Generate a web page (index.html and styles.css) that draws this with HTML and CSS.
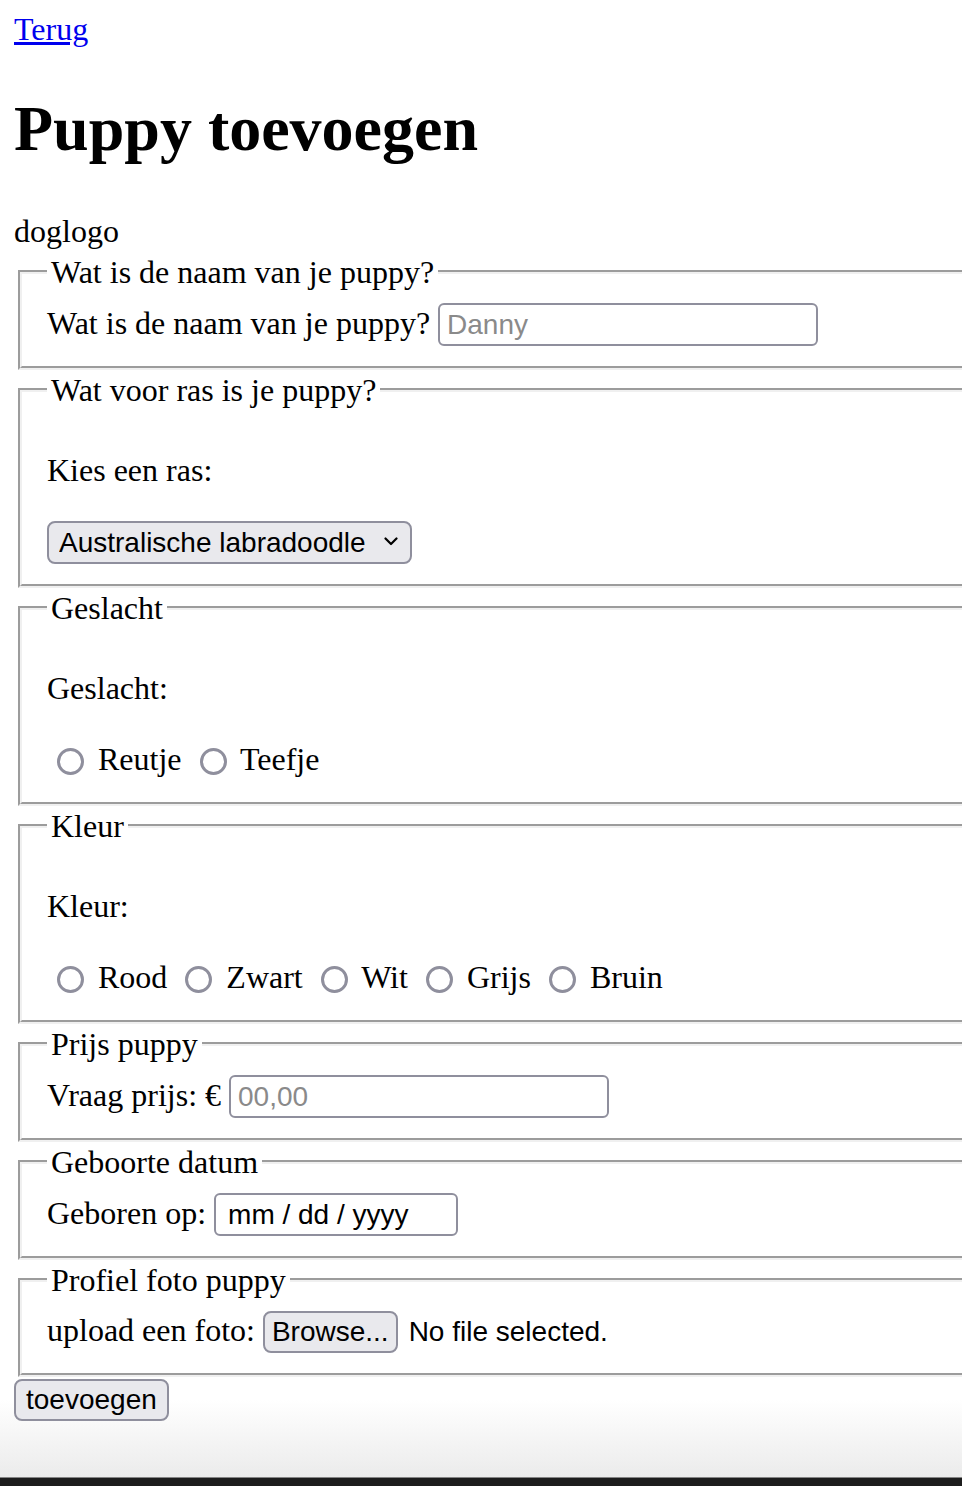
FILE: index.html
```html
<!DOCTYPE html>
<html lang="nl">
<head>
<meta charset="utf-8">
<title>Puppy toevoegen</title>
<link rel="stylesheet" href="styles.css">
</head>
<body>
<a class="back" href="#">Terug</a>
<h1 class="title">Puppy toevoegen</h1>
<div class="logo">doglogo</div>
<form class="puppy-form">
  <fieldset class="group">
    <legend class="group-title">Wat is de naam van je puppy?</legend>
    <div class="row">
      <label for="naam">Wat is de naam van je puppy?</label>
      <input class="field" id="naam" type="text" placeholder="Danny">
    </div>
  </fieldset>
  <fieldset class="group">
    <legend class="group-title">Wat voor ras is je puppy?</legend>
    <p class="question">Kies een ras:</p>
    <div class="choice-row">
      <span class="select-wrap">
        <select class="select" aria-label="ras"><option>Australische labradoodle</option></select>
        <svg class="chevron" viewBox="0 0 14 9" aria-hidden="true"><path d="M1.5 1.5 L7 7 L12.5 1.5" fill="none" stroke="#000" stroke-width="2.2" stroke-linecap="round" stroke-linejoin="round"/></svg>
      </span>
    </div>
  </fieldset>
  <fieldset class="group">
    <legend class="group-title">Geslacht</legend>
    <p class="question">Geslacht:</p>
    <div class="choice-row">
      <label class="option"><input class="radio" type="radio" name="geslacht"> Reutje</label>
      <label class="option"><input class="radio" type="radio" name="geslacht"> Teefje</label>
    </div>
  </fieldset>
  <fieldset class="group">
    <legend class="group-title">Kleur</legend>
    <p class="question">Kleur:</p>
    <div class="choice-row">
      <label class="option"><input class="radio" type="radio" name="kleur"> Rood</label>
      <label class="option"><input class="radio" type="radio" name="kleur"> Zwart</label>
      <label class="option"><input class="radio" type="radio" name="kleur"> Wit</label>
      <label class="option"><input class="radio" type="radio" name="kleur"> Grijs</label>
      <label class="option"><input class="radio" type="radio" name="kleur"> Bruin</label>
    </div>
  </fieldset>
  <fieldset class="group">
    <legend class="group-title">Prijs puppy</legend>
    <div class="row">
      <label for="prijs">Vraag prijs: €</label>
      <input class="field" id="prijs" type="text" placeholder="00,00">
    </div>
  </fieldset>
  <fieldset class="group">
    <legend class="group-title">Geboorte datum</legend>
    <div class="row">
      <label for="datum">Geboren op:</label>
      <input class="field date" id="datum" type="text" placeholder="mm / dd / yyyy">
    </div>
  </fieldset>
  <fieldset class="group">
    <legend class="group-title">Profiel foto puppy</legend>
    <div class="row">
      <span>upload een foto:</span>
      <label class="btn" for="foto">Browse...</label><input class="file-hidden" id="foto" type="file"> <span class="file-status">No file selected.</span>
    </div>
  </fieldset>
  <button class="submit" type="button">toevoegen</button>
</form>
</body>
</html>
```
FILE: styles.css
```css
html {
  min-height: 100%;
  overflow: hidden;
  background: linear-gradient(to bottom, #ffffff 0, #ffffff 1400px, #ebebeb 1477px, #1d1d1d 1478px, #1d1d1d 100%);
}

body {
  margin: 11px 0 0 14px;
  font-family: "Liberation Serif", "Times New Roman", serif;
  font-size: 32px;
  line-height: 36px;
  color: #000;
}

.back {
  color: #0000ee;
  text-decoration: underline;
}

.title {
  font-size: 64px;
  line-height: 76px;
  font-weight: bold;
  margin: 44px 0;
}

.logo {
  line-height: 41px;
}

.puppy-form {
  width: 1010px;
}

.group {
  margin: 2px 0 0 4px;
  border: 4px groove #f0f0f0;
  padding: 13px 25px 20px;
  min-width: 0;
}

.group-title {
  padding: 0 4px;
  line-height: 36px;
}

.row {
  line-height: 36px;
}

.question {
  margin: 31px 0;
}

.choice-row {
  line-height: 45px;
}

.field {
  font-family: "Liberation Sans", Arial, sans-serif;
  font-size: 28px;
  height: 43px;
  width: 380px;
  box-sizing: border-box;
  border: 2px solid #8f8f9d;
  border-radius: 6px;
  padding: 0 7px;
  background: #fff;
  color: #000;
  vertical-align: baseline;
  margin: 0;
}

.field::placeholder {
  color: #8a8a8a;
  opacity: 1;
}

.date {
  width: 244px;
  padding-left: 12px;
}

.date::placeholder {
  color: #000;
}

.select-wrap {
  position: relative;
  display: inline-block;
}

.select {
  appearance: none;
  -webkit-appearance: none;
  font-family: "Liberation Sans", Arial, sans-serif;
  font-size: 28px;
  height: 43px;
  width: 365px;
  box-sizing: border-box;
  border: 2px solid #8f8f9d;
  border-radius: 8px;
  background: #e9e9ed;
  padding: 0 40px 0 10px;
  color: #000;
  margin: 0;
}

.chevron {
  position: absolute;
  right: 14px;
  top: 18px;
  width: 14px;
  height: 9px;
  pointer-events: none;
}

.radio {
  appearance: none;
  -webkit-appearance: none;
  width: 27px;
  height: 27px;
  box-sizing: border-box;
  border: 3px solid #8f8f9d;
  border-radius: 50%;
  background: #fff;
  margin: 0 6px 0 10px;
  vertical-align: -5px;
}

.btn {
  display: inline-block;
  font-family: "Liberation Sans", Arial, sans-serif;
  font-size: 28px;
  height: 42px;
  line-height: 38px;
  box-sizing: border-box;
  padding: 0 7px;
  border: 2px solid #8f8f9d;
  border-radius: 8px;
  background: #e9e9ed;
  margin-right: 3px;
}

.file-hidden {
  display: none;
}

.file-status {
  font-family: "Liberation Sans", Arial, sans-serif;
  font-size: 28px;
}

.submit {
  display: block;
  margin: 2px 0 0;
  font-family: "Liberation Sans", Arial, sans-serif;
  font-size: 28px;
  height: 42px;
  box-sizing: border-box;
  padding: 0 10px;
  border: 2px solid #8f8f9d;
  border-radius: 8px;
  background: #e9e9ed;
  color: #000;
}
```
